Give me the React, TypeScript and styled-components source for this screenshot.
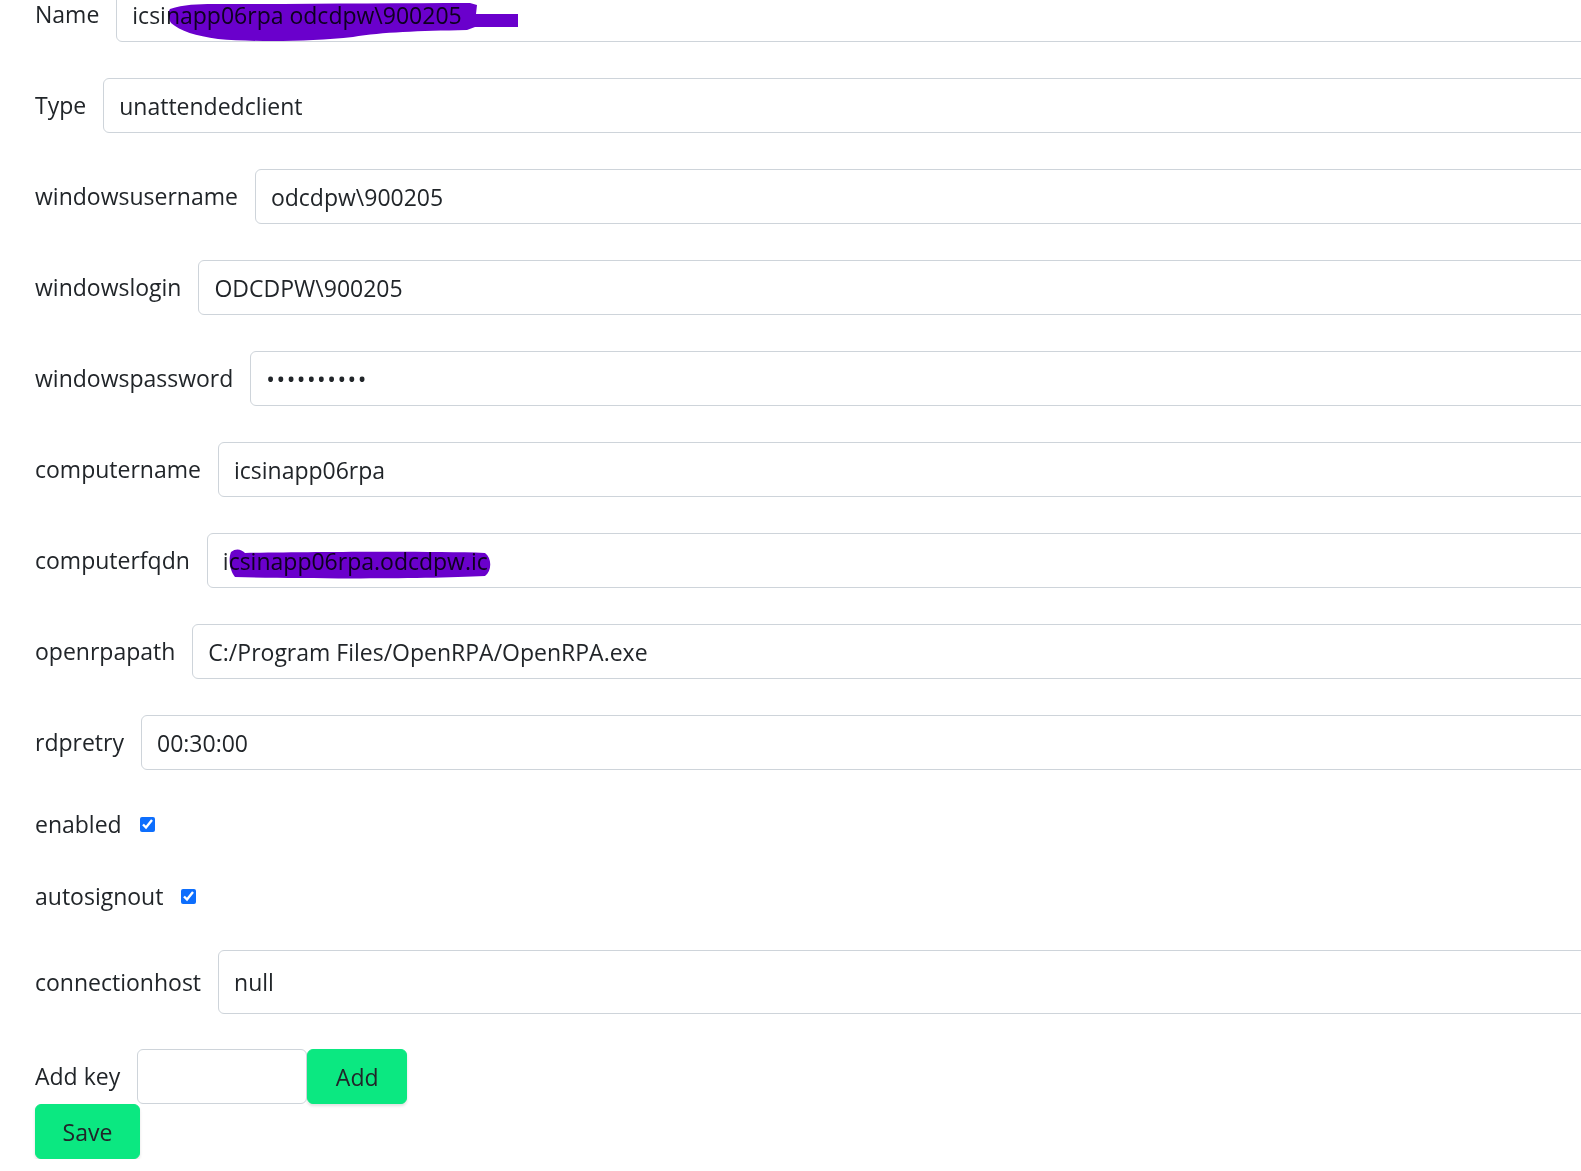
import React from "react";
import styled, { createGlobalStyle } from "styled-components";

const GlobalStyle = createGlobalStyle`
  html, body {
    margin: 0;
    padding: 0;
    background: #ffffff;
    overflow: hidden;
  }
  body {
    font-family: "Open Sans", "Noto Sans", Arial, sans-serif;
    color: #212529;
  }
`;

const Page = styled.div`
  padding-left: 35px;
  width: 2200px;
`;

const Form = styled.form`
  display: flex;
  flex-direction: column;
  gap: 36px;
  margin-top: -13px;
`;

const Row = styled.div`
  display: flex;
  align-items: center;
  min-height: 36px;
`;

const Label = styled.label`
  font-size: 23px;
  line-height: 1.5;
  color: #212529;
  margin-right: 17px;
  white-space: nowrap;
`;

const Field = styled.div<{ $grow?: boolean; $width?: number }>`
  position: relative;
  flex: ${(p) => (p.$grow ? "1 1 auto" : "0 0 auto")};
  width: ${(p) => (p.$width ? `${p.$width}px` : "auto")};
`;

const Input = styled.input<{ $tall?: boolean }>`
  display: block;
  box-sizing: border-box;
  width: 100%;
  height: ${(p) => (p.$tall ? "64px" : "55px")};
  padding: 0 15px;
  font-family: "Open Sans", "Noto Sans", Arial, sans-serif;
  font-size: 23px;
  color: #212529;
  background: #ffffff;
  border: 1px solid #ced4da;
  border-radius: 6px;
  outline: none;
  &[type="password"] {
    letter-spacing: 1.5px;
  }
`;

const Scribble = styled.svg`
  position: absolute;
  pointer-events: none;
  mix-blend-mode: multiply;
`;

const Check = styled.input`
  margin: 0 0 0 1px;
  width: 15px;
  height: 15px;
  accent-color: #0d6efd;
`;

const Button = styled.button<{ $w: number }>`
  box-sizing: border-box;
  width: ${(p) => p.$w}px;
  height: 55px;
  padding: 0;
  font-family: "Open Sans", "Noto Sans", Arial, sans-serif;
  font-size: 23px;
  color: #212529;
  background: #0be881;
  border: 1px solid #0be881;
  border-radius: 6px;
  box-shadow: 0 2px 3px rgba(0, 0, 0, 0.12);
  cursor: pointer;
`;

const Bottom = styled.div`
  display: flex;
  flex-direction: column;
  align-items: flex-start;
  margin-top: -1px;
`;

type F = { label: string; value: string; type?: string; scribble?: "name" | "fqdn" };

const fields: F[] = [
  { label: "Name", value: "icsinapp06rpa odcdpw\\900205", scribble: "name" },
  { label: "Type", value: "unattendedclient" },
  { label: "windowsusername", value: "odcdpw\\900205" },
  { label: "windowslogin", value: "ODCDPW\\900205" },
  { label: "windowspassword", value: "0123456789", type: "password" },
  { label: "computername", value: "icsinapp06rpa" },
  { label: "computerfqdn", value: "icsinapp06rpa.odcdpw.ic", scribble: "fqdn" },
  { label: "openrpapath", value: "C:/Program Files/OpenRPA/OpenRPA.exe" },
  { label: "rdpretry", value: "00:30:00" },
];

const NameScribble = () => (
  <Scribble width="352" height="42" viewBox="0 0 352 42" style={{ left: 52, top: 14 }}>
    <path
      d="M2,8 C20,2 40,3 60,3 C150,3 230,2 302,2 L309,4 L308,13 L350,13 L350,26 L307,26 L299,29 C250,30 215,31 185,36 C140,41 85,41 50,38 C28,35 12,30 3,22 C0,17 0,11 2,8 Z"
      fill="#6a00cc"
    />
  </Scribble>
);

const FqdnScribble = () => (
  <Scribble width="266" height="32" viewBox="0 0 266 32" style={{ left: 20, top: 15 }}>
    <path
      d="M4,4 C9,0 14,1 18,5 C80,4 200,3 258,5 C265,10 265,23 258,28 C200,31 80,31 8,29 C3,23 1,12 4,4 Z"
      fill="#6a00cc"
    />
  </Scribble>
);

export default function App() {
  return (
    <Page>
      <GlobalStyle />
      <Form onSubmit={(e) => e.preventDefault()}>
        {fields.map((f) => (
          <Row key={f.label}>
            <Label>{f.label}</Label>
            <Field $grow>
              <Input type={f.type ?? "text"} defaultValue={f.value} />
              {f.scribble === "name" && <NameScribble />}
              {f.scribble === "fqdn" && <FqdnScribble />}
            </Field>
          </Row>
        ))}
        <Row>
          <Label>enabled</Label>
          <Check type="checkbox" defaultChecked />
        </Row>
        <Row>
          <Label>autosignout</Label>
          <Check type="checkbox" defaultChecked />
        </Row>
        <Row>
          <Label>connectionhost</Label>
          <Field $grow>
            <Input $tall defaultValue="null" />
          </Field>
        </Row>
        <Bottom>
          <Row>
            <Label>Add key</Label>
            <Field $width={170}>
              <Input defaultValue="" />
            </Field>
            <Button type="button" $w={100}>Add</Button>
          </Row>
          <Button type="submit" $w={105}>Save</Button>
        </Bottom>
      </Form>
    </Page>
  );
}
